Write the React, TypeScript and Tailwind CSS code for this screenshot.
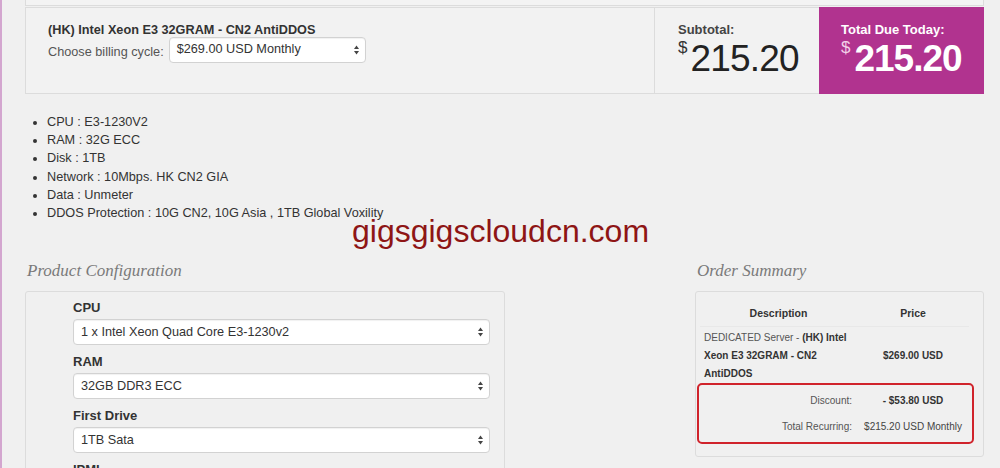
import React from 'react';

const specs = [
  'CPU : E3-1230V2',
  'RAM : 32G ECC',
  'Disk : 1TB',
  'Network : 10Mbps. HK CN2 GIA',
  'Data : Unmeter',
  'DDOS Protection : 10G CN2, 10G Asia , 1TB Global Voxility',
];

const options = [
  { label: 'CPU', value: '1 x Intel Xeon Quad Core E3-1230v2' },
  { label: 'RAM', value: '32GB DDR3 ECC' },
  { label: 'First Drive', value: '1TB Sata' },
  { label: 'IPMI', value: 'Yes' },
];

function Arrows() {
  return (
    <svg width="5" height="10" viewBox="0 0 5 10" className="shrink-0">
      <path d="M2.5 0.5 L5 4 H0 Z" fill="#444" />
      <path d="M0 6 H5 L2.5 9.5 Z" fill="#444" />
    </svg>
  );
}

function Select({ value, className = '' }: { value: string; className?: string }) {
  return (
    <div
      className={`flex items-center justify-between h-[26px] bg-white border border-[#d2d2d2] rounded-[4px] pl-[7px] pr-[6px] text-[12.7px] text-[#333] shadow-[inset_0_1px_1px_rgba(0,0,0,0.06)] ${className}`}
    >
      <span>{value}</span>
      <Arrows />
    </div>
  );
}

export default function App() {
  return (
    <div className="h-screen overflow-hidden flex bg-[#f0f0f0] text-[#333] font-['Liberation_Sans',Arial,sans-serif]">
      <div className="w-[2px] shrink-0 bg-[#d3a6cf]" />
      <div className="relative flex-1 pl-[23px] pr-[16px]">
        <div className="h-[6px] border-x border-b border-[#dcdcdc] bg-[#f3f3f3]" />

        <div className="mt-px h-[87px] flex border border-[#dcdcdc] bg-[#f2f2f2]">
          <div className="flex-1 pl-[22px] pt-[14px]">
            <div className="text-[12.7px] leading-[16px] font-bold text-[#333]">
              (HK) Intel Xeon E3 32GRAM - CN2 AntiDDOS
            </div>
            <div className="flex items-center -mt-px">
              <span className="text-[12.7px] text-[#555] mt-[6px] mr-[5px]">Choose billing cycle:</span>
              <Select value="$269.00 USD Monthly" className="w-[197px]" />
            </div>
          </div>
          <div className="w-[165px] border-l border-[#dcdcdc] pl-[23px] pt-[14px]">
            <div className="text-[13px] leading-[16px] font-bold text-[#444]">Subtotal:</div>
            <div className="flex items-start mt-[1px]">
              <span className="text-[17px] leading-none text-[#333] mr-[3px]">$</span>
              <span className="text-[37px] leading-none tracking-[-0.8px] text-[#222] mt-[1px]">215.20</span>
            </div>
          </div>
          <div className="w-[165px] -my-px -mr-px bg-[#b1338f] pl-[22px] pt-[15px] text-white">
            <div className="text-[13px] leading-[16px] font-bold">Total Due Today:</div>
            <div className="flex items-start mt-[1px]">
              <span className="text-[17px] leading-none text-[#f3d0e8] mr-[4px]">$</span>
              <span className="text-[37px] leading-none font-bold tracking-[-1px] mt-[1px]">215.20</span>
            </div>
          </div>
        </div>

        <ul className="mt-[19px] list-disc pl-[22px] text-[12.7px] leading-[18.2px] text-[#333]">
          {specs.map((s) => (
            <li key={s}>{s}</li>
          ))}
        </ul>

        <div className="absolute left-[350px] top-[215px] text-[32px] leading-none text-[#8e1515]">
          gigsgigscloudcn.com
        </div>

        <div className="mt-[39px] flex justify-between">
          <div className="w-[480px]">
            <div className="h-[20px] leading-[20px] pl-[2px] text-[17px] italic font-light text-[#7a7a7a] font-['Liberation_Serif',serif]">
              Product Configuration
            </div>
            <div className="mt-[10px] border border-[#dcdcdc] rounded-[3px] pl-[47px] pr-[14px] pt-[8px] pb-[10px]">
              {options.map((o) => (
                <div key={o.label} className="pb-[9px]">
                  <div className="text-[13px] leading-[16px] font-bold text-[#333]">{o.label}</div>
                  <Select value={o.value} className="mt-[3px]" />
                </div>
              ))}
            </div>
          </div>

          <div className="w-[289px]">
            <div className="h-[20px] leading-[20px] pl-[2px] text-[17px] italic font-light text-[#7a7a7a] font-['Liberation_Serif',serif]">
              Order Summary
            </div>
            <div className="mt-[10px] border border-[#dcdcdc] rounded-[3px] pl-[4px] pr-[14px] pb-[12px] text-[10px] text-[#333]">
              <div className="grid grid-cols-[157px_1fr] h-[35px] pt-[15px] leading-[13px] font-bold text-[10.5px] text-center border-b border-[#e8e8e8]">
                <div>Description</div>
                <div>Price</div>
              </div>
              <div className="grid grid-cols-[157px_1fr] pt-[2px] leading-[18px]">
                <div className="pl-[4px]">
                  <span className="text-[#555]">DEDICATED Server - </span>
                  <b>(HK) Intel</b>
                  <br />
                  <b>Xeon E3 32GRAM - CN2</b>
                  <br />
                  <b>AntiDDOS</b>
                </div>
                <div className="flex items-center justify-center font-bold">$269.00 USD</div>
              </div>
              <div className="-ml-[3px] -mr-[5px] border-2 border-[#d0232b] rounded-[5px] pl-px pr-[3px] pt-[2px] pb-[3px]">
                <div className="grid grid-cols-[157px_1fr] h-[26px] items-center">
                  <div className="text-right pr-[5px] text-[#555]">Discount:</div>
                  <div className="text-center font-bold">- $53.80 USD</div>
                </div>
                <div className="grid grid-cols-[157px_1fr] h-[26px] items-center">
                  <div className="text-right pr-[5px] text-[#555]">Total Recurring:</div>
                  <div className="text-center text-[#444]">$215.20 USD Monthly</div>
                </div>
              </div>
            </div>
          </div>
        </div>
      </div>
    </div>
  );
}
